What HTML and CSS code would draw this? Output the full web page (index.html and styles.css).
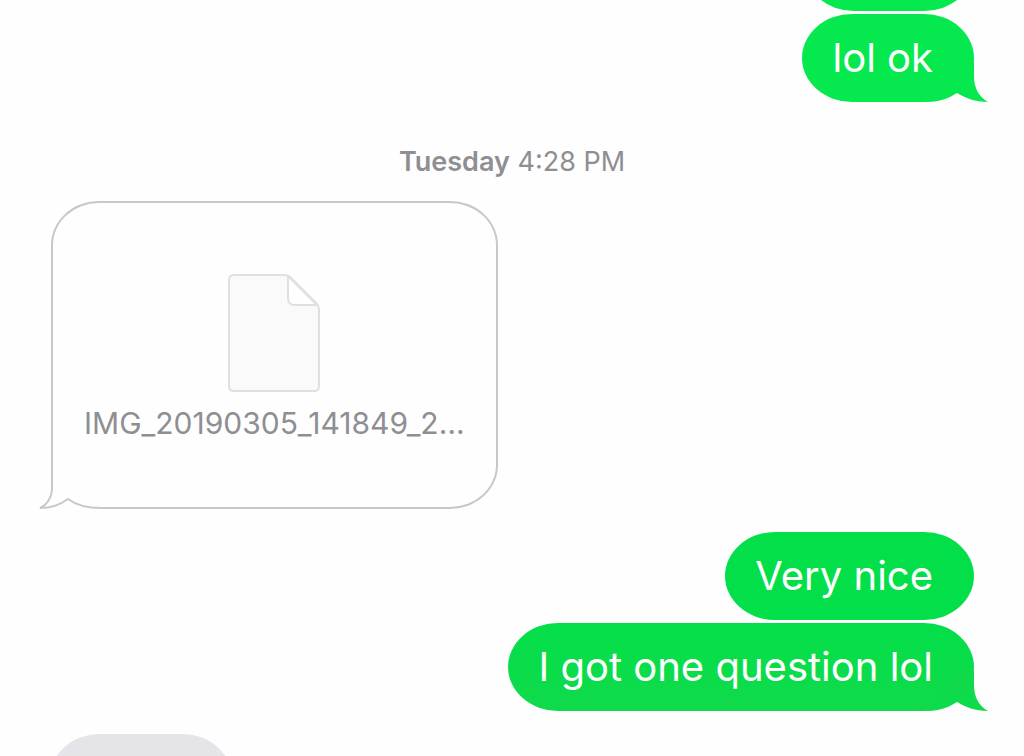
FILE: index.html
```html
<!DOCTYPE html>
<html lang="en">
<head>
<meta charset="utf-8">
<meta name="viewport" content="width=device-width, initial-scale=1">
<title>Messages</title>
<link rel="stylesheet" href="styles.css">
</head>
<body>
<main class="thread">
  <div class="bubble sent bright earlier"></div>
  <div class="bubble sent bright">lol ok
    <svg class="tail" viewBox="0 0 64 40" aria-hidden="true"><path d="M30 0H48V14C48 26 53 35 62 40C50 40 39 36 31 31C22 37 12 40 0 40Z"/></svg>
  </div>
  <time class="stamp"><strong>Tuesday</strong> 4:28 PM</time>
  <div class="attachment">
    <svg class="page" viewBox="0 0 92 120" aria-hidden="true">
      <path class="sheet" d="M6 2H56Q60 2 63 5L88 30Q91 33 91 37V113Q91 118 86 118H6Q1 118 1 113V7Q1 2 6 2Z"/>
      <path class="fold" d="M60 3V25Q60 32 67 32H89Z"/>
    </svg>
    <span class="filename">IMG_20190305_141849_2…</span>
    <svg class="outline-tail" viewBox="0 0 64 52" aria-hidden="true">
      <path class="mask" d="M10 0H64V52H10Z"/>
      <path class="edge" d="M15 0V30C15 39 10 47 3 50C13 50 23 47 31 41C39 47 50 50 64 50"/>
    </svg>
  </div>
  <div class="bubble sent">Very nice</div>
  <div class="bubble sent deep">I got one question lol
    <svg class="tail" viewBox="0 0 64 40" aria-hidden="true"><path d="M30 0H48V14C48 26 53 35 62 40C50 40 39 36 31 31C22 37 12 40 0 40Z"/></svg>
  </div>
  <div class="bubble received"></div>
</main>
</body>
</html>
```
FILE: styles.css
```css
* {
  box-sizing: border-box;
}

body {
  margin: 0;
  background: #fefefe;
  font-family: Inter, "Liberation Sans", sans-serif;
}

.thread {
  display: flex;
  flex-direction: column;
  height: 100vh;
  overflow: hidden;
  padding: 0 50px;
}

.bubble {
  position: relative;
  flex: none;
  min-width: 170px;
  min-height: 88px;
  margin-bottom: 3px;
  padding: 18px 41px 18px 30px;
  border-radius: 50px / 44px;
  font-size: 40px;
  line-height: 52px;
}

.sent {
  align-self: flex-end;
  color: #fff;
  background: #03df49;
  fill: #0fda4b;
}

.bright {
  background: #05e94f;
  fill: #05e94f;
}

.deep {
  background: linear-gradient(#03df49, #10da4b);
}

.earlier {
  margin-top: -77px;
}

.tail {
  position: absolute;
  right: -16px;
  bottom: 0;
  width: 64px;
  height: 40px;
}

.stamp {
  flex: none;
  margin: 41px 0 24px;
  color: #8e8e93;
  font-size: 27px;
  line-height: 32px;
  text-align: center;
}

.stamp strong {
  font-weight: 600;
}

.attachment {
  position: relative;
  flex: none;
  align-self: flex-start;
  display: flex;
  flex-direction: column;
  align-items: center;
  gap: 12px;
  min-width: 446px;
  margin: -1px 0 23px 1px;
  padding: 70px 31px 66px;
  border: 2px solid #c8c8ca;
  border-radius: 48px / 44px;
}

.page {
  width: 92px;
  height: 120px;
  stroke: #e0e0e0;
  stroke-width: 2;
}

.sheet {
  fill: #fafafa;
}

.fold {
  fill: #fefefe;
  stroke-linejoin: round;
}

.filename {
  color: #8e8e93;
  font-size: 30px;
  line-height: 36px;
}

.outline-tail {
  position: absolute;
  left: -16px;
  bottom: -3px;
  width: 64px;
  height: 52px;
}

.mask {
  fill: #fefefe;
}

.edge {
  fill: none;
  stroke: #c8c8ca;
  stroke-width: 2;
}

.received {
  align-self: flex-start;
  min-width: 182px;
  margin-top: 20px;
  background: #e5e4e9;
}
```
